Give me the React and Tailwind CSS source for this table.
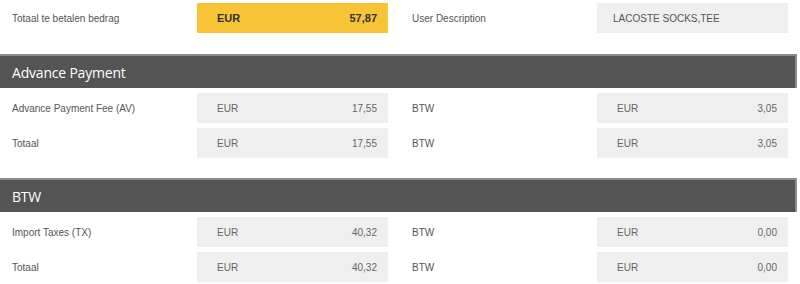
import React from "react";

const labelFont = { fontFamily: '"Liberation Sans", Arial, sans-serif' };

function Amount({ currency, value, highlight }) {
  return (
    <div
      className={
        "flex h-[30px] w-[191px] items-center justify-between pl-[20px] pr-[11px] " +
        (highlight ? "bg-[#f6c436] text-[11px] font-bold text-[#333]" : "bg-[#efefef] text-[10px] text-[#666]")
      }
    >
      <span>{currency}</span>
      <span>{value}</span>
    </div>
  );
}

function Field({ label, children }) {
  return (
    <div className="flex w-[400px] items-center">
      <div className="w-[197px] pl-[12px] text-[10px] text-[#555]">{label}</div>
      {children}
    </div>
  );
}

function SectionHeader({ title }) {
  return (
    <div className="flex h-[34px] w-[797px] items-center border-t-2 border-r-2 border-[#8c8c8c] bg-[#545454] pl-[12px] text-[14px] text-white" style={{ fontFamily: '"Open Sans", sans-serif' }}>
      <span className="tracking-[-0.2px]">{title}</span>
    </div>
  );
}

function Section({ title, rows }) {
  return (
    <div className="flex flex-col">
      <SectionHeader title={title} />
      <div className="mt-[5px] flex flex-col gap-[5px]">
        {rows.map((r, i) => (
          <div key={i} className="flex">
            <Field label={r.label}>
              <Amount currency="EUR" value={r.amount} />
            </Field>
            <Field label="BTW">
              <Amount currency="EUR" value={r.btw} />
            </Field>
          </div>
        ))}
      </div>
    </div>
  );
}

export default function App() {
  return (
    <div className="h-[284px] w-[800px] overflow-hidden bg-white pt-[3px]" style={labelFont}>
      {/* Total row */}
      <div className="flex">
        <Field label="Totaal te betalen bedrag">
          <Amount currency="EUR" value="57,87" highlight />
        </Field>
        <Field label="User Description">
          <div className="flex h-[30px] w-[191px] items-center bg-[#efefef] pl-[16px] text-[10px] text-[#555]">
            LACOSTE SOCKS,TEE
          </div>
        </Field>
      </div>

      <div className="mt-[21px]">
        <Section
          title="Advance Payment"
          rows={[
            { label: "Advance Payment Fee (AV)", amount: "17,55", btw: "3,05" },
            { label: "Totaal", amount: "17,55", btw: "3,05" },
          ]}
        />
      </div>

      <div className="mt-[20px]">
        <Section
          title="BTW"
          rows={[
            { label: "Import Taxes (TX)", amount: "40,32", btw: "0,00" },
            { label: "Totaal", amount: "40,32", btw: "0,00" },
          ]}
        />
      </div>
    </div>
  );
}
